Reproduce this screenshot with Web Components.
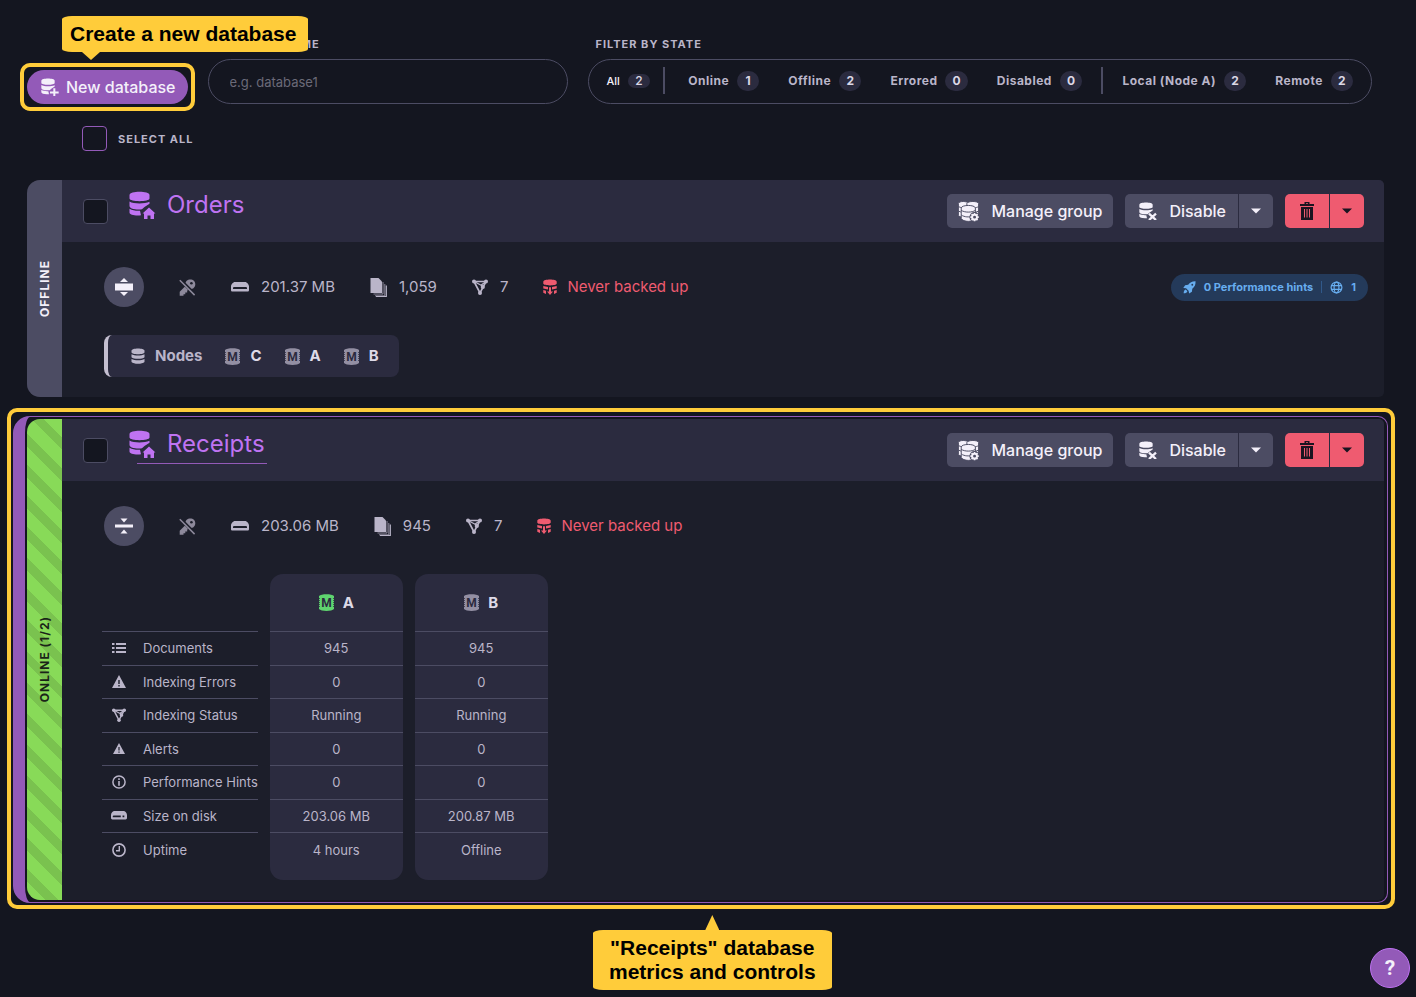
<!DOCTYPE html>
<html lang="en">
<head>
<meta charset="utf-8">
<meta name="viewport" content="width=device-width, initial-scale=1">
<title>Databases</title>
<style>
  html {
    background: #141620;
    --panel: #1c1e2a;
    --panel-head: #2b2b3f;
    --well: #141620;
    --line: #4c4c63;
    --muted: #bab5c9;
    --bright: #f4f0fa;
    --purple: #935ab8;
    --link: #bf73f2;
    --red: #ef5b70;
    --green: #88da58;
    --note: #ffcc3a;
  }

  body {
    color: #bab5c9;
    font-family: Inter, "Open Sans", sans-serif;
    font-size: 15px;
    line-height: 20px;
    margin: 0;
  }
</style>
</head>
<body>
<databases-page></databases-page>

<script>
// the three stacked discs, with room for a small glyph at bottom right
const DISCS = `
  <path d="M.5 4C.5-.3 20.500-.3 20.500 4v3.500C20.500 11 .5 11 .5 7.500z"/>
  <path d="M.5 10.500c4 2.600 15 2.600 20 .3v2L15.500 16l-2.500 2.300C8 19 .5 18.200.5 15z"/>
  <path d="M.5 17.800c3 1.800 6.500 2.200 10.500 2l1 4.500C6 25 .5 23.700.5 21.500z"/>`;

// each icon is [viewBox, markup]
const ICONS = {
  'db-home': ['0 0 27 28', DISCS + '<path d="M20 16.500l6.500 6H25V28h-3.500v-3.500h-3V28H15v-5.500h-1.500z"/>'],
  'db-plus': ['0 0 27 28', DISCS + '<path d="M18.500 15.500h3v4.800h5v3h-5V28h-3v-4.700h-5v-3h5z"/>'],
  'db-cross': ['0 0 27 28', DISCS + '<path d="M15 17.500l10.500 9.500M25.500 17.500L15 27" fill="none" stroke="currentColor" stroke-width="3.500"/>'],
  'db-group': ['0 0 26 26', `
    <g stroke="#4c4c63" stroke-width="1.200">
      <path d="M.5 3C1-.2 12-.2 12.500 3v15c-1 2.500-11 2.500-12 0z"/>
      <path d="M11 3C12-.2 25-.2 25.500 3v15c-1 2.500-13 2.500-14.500 0z"/>
      <path d="M.5 7c2 1 4 1.300 6 1.300M.5 12.500c2 1 3 1.200 5 1.200M19.500 8.300c3 0 4.500-.5 6-1.300M20.500 13.700c2 0 3.500-.4 5-1.200" fill="none"/>
      <path d="M4 8.500C5 4.500 20.500 4.500 21.500 8.500v13c-2 5-15.500 5-17.500 0z"/>
      <path d="M4 11.500c4 3 13.500 3 17.500 0M4 17.200c4 3 10 3 13.500 1.500" fill="none"/>
    </g>
    <circle cx="20.500" cy="20" r="6.300" fill="#4c4c63"/>
    <circle cx="20.500" cy="20" r="3" fill="none" stroke="currentColor" stroke-width="2.400"/>
    <path d="M20.500 14.800v2M20.500 23.200v2M15.300 20h2M23.700 20h2M16.800 16.300l1.500 1.500M22.700 22.200l1.500 1.500M24.200 16.300l-1.500 1.500M18.300 22.200l-1.500 1.500" stroke="currentColor" stroke-width="2"/>`],
  'db': ['0 0 14 16', `
    <path d="M.5 2.800C.5-.4 13.500-.4 13.500 2.800v1.400c0 2.600-13 2.600-13 0z"/>
    <path d="M.5 6.200c3 1.700 10 1.700 13 0v3c-2 2.200-11 2.200-13 0z"/>
    <path d="M.5 11c3 1.700 10 1.700 13 0v3c-2 2.400-11 2.400-13 0z"/>`],
  'backup': ['0 0 14 16', `
    <path d="M.3 2.600C.3-.3 13.700-.3 13.700 2.600v2c0 2.500-13.400 2.500-13.400 0z"/>
    <path d="M.3 7L5 8v2.500L.3 9.500zM13.700 7L9 8v2.500l4.700-1zM.3 11l2.700.7V15L.3 13.800zM13.700 11l-2.700.7V15l2.700-1.200z"/>
    <path d="M6 8.300h2v4.200h2L7 16l-3-3.500h2z"/>`],
  'node': ['0 0 15 17', `
    <path d="M0 2C2-.5 13-.5 15 2v13c-2 2.500-13 2.500-15 0z"/>
    <path d="M.4 4v10M14.600 4v10" stroke="#2b2b3f" stroke-width=".8" stroke-dasharray="1 1"/>
    <text x="7.500" y="12.700" text-anchor="middle" font-family="Roboto, sans-serif" font-size="12" font-weight="700" fill="#2b2b3f">M</text>`],
  'key-off': ['0 0 17 17', `
    <path d="M6.300 5.500C6.300 2.300 8.500.5 11.300.5c2.900 0 5 2 5 4.800 0 3-2.100 4.900-5 4.900l-1.600-.1-1.500 1.700v1.700H6.300v1.700H4.500v1.600H.7v-4l5.800-5.800z"/>
    <circle cx="12.400" cy="4.300" r="1.300" fill="#1c1e2a"/>
    <path d="M1.500 1l14.300 14.300" fill="none" stroke="#1c1e2a" stroke-width="3.200"/>
    <path d="M.8 1.300l14.800 14.800" fill="none" stroke="currentColor" stroke-width="1.500"/>`],
  'disk': ['0 0 18 10', '<path fill-rule="evenodd" d="M4 0h10c2 0 4 2.500 4 4.500V8c0 1-.6 1.500-1.500 1.500h-15C.6 9.500 0 9 0 8V4.500C0 2.500 2 0 4 0zM3 5c-.6 0-1 .3-1 .9V7h14V5.900c0-.6-.4-.9-1-.9z"/>'],
  'disk-dot': ['0 0 18 10', '<path fill-rule="evenodd" d="M4 0h10c2 0 4 2.500 4 4.500V8c0 1-.6 1.500-1.500 1.500h-15C.6 9.500 0 9 0 8V4.500C0 2.500 2 0 4 0zM3 5c-.6 0-1 .3-1 .9V7h9V5zM13 5v2h2V5z"/>'],
  'docs': ['0 0 17 19', `
    <path d="M.5 0h8l3.500 3.500V15H.5z"/>
    <path d="M13 4v12H3.500M14.800 6v11.800H5" fill="none" stroke="currentColor" opacity=".7"/>
    <path d="M16.300 7.500v11H6" fill="none" stroke="currentColor" stroke-width="1.200"/>`],
  'index': ['0 0 16 16', `
    <path d="M2 2.500h12L8 14z" fill="none" stroke="currentColor" stroke-width="1.700"/>
    <path d="M2 2.500l9.500 5M8.500 6.500l5-3.500" fill="none" stroke="currentColor" stroke-width="1.400"/>
    <circle cx="2" cy="2.500" r="2"/><circle cx="14" cy="2.500" r="2"/>
    <circle cx="8" cy="14" r="2"/><circle cx="10.800" cy="8" r="2.100"/>`],
  'expand': ['0 0 18 18', '<path d="M9 0l4 4H5zM0 5.500h18v7H0zM5 14h8l-4 4z"/>'],
  'collapse': ['0 0 18 18', '<path d="M5.500 1.500h7L9 5.500zM0 7.500h18v3H0zM9 12.500l3.500 4h-7z"/>'],
  'trash': ['0 0 14 18', `
    <path d="M4.500 0h5v2H14v2H0V2h4.500zM6 1.200V2h2v-.8z" fill-rule="evenodd"/>
    <path d="M1 5h12v13H1z"/>
    <path d="M4.500 7v8.500M7 7v8.500M9.500 7v8.500" stroke="#ef5b70" stroke-width="1"/>`],
  'caret': ['0 0 10 6', '<path d="M0 .5h10l-5 5z"/>'],
  'rocket': ['0 0 14 14', `
    <path fill-rule="evenodd" d="M13.500.3c.2 4-1 6.200-3.500 8l-.4 3.200-3 2-.6-3-2.700-2.600L.3 7.500l2-3 3.300-.4C7.500 1.500 9.800.2 13.500.3zM10 3a1 1 0 100 2 1 1 0 000-2z"/>
    <path d="M3 9.200L4.700 11c-.6 1.600-2 2.300-4 2.200 0-2 .6-3.500 2.300-4z"/>`],
  'globe': ['0 0 14 14', `
    <g fill="none" stroke="currentColor" stroke-width="1.300"><circle cx="7" cy="7" r="5.800"/>
    <ellipse cx="7" cy="7" rx="2.600" ry="5.800"/><path d="M1.700 5h10.600M1.700 9h10.600"/></g>`],
  'list': ['0 0 14 12', '<path d="M0 1h2.500v2H0zM4 1h10v2H4zM0 5h2.500v2H0zM4 5h10v2H4zM0 9h2.500v2H0zM4 9h10v2H4z"/>'],
  'warning': ['0 0 14 13', '<path fill-rule="evenodd" d="M7 0l7 13H0zM6.300 5v4h1.400V5zM6.300 10v1.400h1.400V10z"/>'],
  'alert': ['0 0 14 13', '<path fill-rule="evenodd" d="M7 1l6 11H1zM6.400 5v3.500h1.200V5zM6.400 9.500v1.200h1.200V9.500z"/>'],
  'info': ['0 0 14 14', '<circle cx="7" cy="7" r="6.100" fill="none" stroke="currentColor" stroke-width="1.500"/><path d="M6.200 3.300h1.600v1.600H6.200zM6.200 6h1.600v4.700H6.200z"/>'],
  'clock': ['0 0 14 14', '<circle cx="7" cy="7" r="6.100" fill="none" stroke="currentColor" stroke-width="1.600"/><path d="M7.300 3v4.700H4" fill="none" stroke="currentColor" stroke-width="1.400"/>'],
};

function attach(el, html) {
  const template = document.createElement('template');
  template.innerHTML = html;
  el.attachShadow({ mode: 'open' });
  el.shadowRoot.appendChild(template.content.cloneNode(true));
}

// <rv-icon name="db" size="16"> size is the drawn width
class RvIcon extends HTMLElement {
  connectedCallback() {
    if (this.shadowRoot) return;
    const [box, markup] = ICONS[this.getAttribute('name')];
    const size = this.getAttribute('size') || 16;
    attach(this, `
      <style>
        :host { display: inline-flex; flex: none; }
        svg { display: block; fill: currentColor; height: auto; }
      </style>
      <svg viewBox="${box}" width="${size}" aria-hidden="true">${markup}</svg>
    `);
  }
}

// <rv-callout tail="down|up"> yellow note with a pointer
class RvCallout extends HTMLElement {
  constructor() {
    super();
    attach(this, `
      <style>
        :host {
          background: var(--note);
          border-radius: 10px / 3px;
          color: #000;
          display: block;
          font: bold 21px/24px "Liberation Sans", Arial, sans-serif;
          padding: 6px 12px 6px 8px;
          position: absolute;
          white-space: nowrap;
          z-index: 2;
        }
        :host::after {
          background: var(--note);
          content: "";
          height: 8px;
          left: 20px;
          position: absolute;
          top: 100%;
          width: 18px;
          clip-path: polygon(0 0, 100% 0, 50% 100%);
        }
        :host([tail="up"]) { padding: 6px 16px; text-align: center; }
        :host([tail="up"])::after {
          bottom: 100%;
          clip-path: polygon(50% 0, 100% 100%, 0 100%);
          height: 15px;
          left: 50%;
          margin-left: -7px;
          top: auto;
          width: 14px;
        }
      </style>
      <slot></slot>
    `);
  }
}

// <rv-highlight> yellow frame around whatever it holds
class RvHighlight extends HTMLElement {
  constructor() {
    super();
    attach(this, `
      <style>
        :host { display: block; position: relative; }
        .frame {
          border: 4px solid var(--note);
          border-radius: 10px;
          inset: var(--frame-inset, -7px);
          pointer-events: none;
          position: absolute;
        }
      </style>
      <slot></slot>
      <div class="frame"></div>
    `);
  }
}

// <rv-button icon="..." icon-size="..." tone="danger" part-of="start|end" label="...">
class RvButton extends HTMLElement {
  connectedCallback() {
    if (this.shadowRoot) return;
    const icon = this.getAttribute('icon');
    const label = this.getAttribute('label');
    attach(this, `
      <style>
        :host { display: block; }
        button {
          align-items: center;
          background: var(--line);
          border: 0;
          border-radius: 5px;
          color: var(--bright);
          cursor: pointer;
          display: flex;
          font: 500 16px/20px Inter, sans-serif;
          gap: 12px;
          height: 34px;
          padding: 0 11px;
          white-space: nowrap;
        }
        button:hover { filter: brightness(1.1); }
        :host([part-of="start"]) button { border-radius: 5px 0 0 5px; padding: 0 12px 0 14px; }
        :host([part-of="end"]) button { border-radius: 0 5px 5px 0; padding: 0 12px; }
        :host([tone="danger"]) button { background: var(--red); color: #1a1420; }
        :host([tone="danger"][part-of="start"]) button { padding: 0 15px; }
        :host([tone="primary"]) button {
          background: var(--purple);
          border-radius: 17px;
          gap: 7px;
          padding: 0 12px 0 14px;
        }
      </style>
      <button type="button" ${label ? `aria-label="${label}"` : ''}>
        <rv-icon name="${icon}" size="${this.getAttribute('icon-size') || 18}"></rv-icon>
        ${label ? '' : '<slot></slot>'}
      </button>
    `);
  }
}

// <rv-check label="..." show-label>
class RvCheck extends HTMLElement {
  connectedCallback() {
    if (this.shadowRoot) return;
    const shown = this.hasAttribute('show-label');
    const label = this.getAttribute('label');
    attach(this, `
      <style>
        :host { display: block; }
        label { align-items: center; display: flex; gap: 11px; }
        input {
          appearance: none;
          background: var(--well);
          border: 1px solid ${shown ? 'var(--purple)' : 'var(--line)'};
          border-radius: 4px;
          height: 25px;
          margin: 0;
          width: 25px;
        }
        input:checked { background: var(--purple); }
        span {
          font-size: 11px;
          font-weight: 700;
          letter-spacing: 1px;
          text-transform: uppercase;
        }
      </style>
      <label><input type="checkbox" ${shown ? '' : `aria-label="${label}"`}>${shown ? `<span>${label}</span>` : ''}</label>
    `);
  }
}

class StateFilter extends HTMLElement {
  constructor() {
    super();
    const item = ([name, count]) => `<button type="button">${name}<span class="count">${count}</span></button>`;
    attach(this, `
      <style>
        :host { display: block; }
        .title {
          font-size: 11px;
          font-weight: 700;
          letter-spacing: 1px;
          line-height: 16px;
          margin: 0 0 7px 8px;
        }
        .states {
          align-items: center;
          background: var(--well);
          border: 1px solid var(--line);
          border-radius: 23px;
          box-sizing: border-box;
          display: flex;
          height: 45px;
          justify-content: space-between;
          padding: 0 18px 2px;
        }
        button {
          align-items: center;
          background: none;
          border: 0;
          color: inherit;
          cursor: pointer;
          display: flex;
          font: 700 12px/20px Inter, sans-serif;
          gap: 8px;
          letter-spacing: 0.5px;
          padding: 0;
          white-space: nowrap;
        }
        .all { color: var(--bright); font-size: 11px; font-weight: 500; letter-spacing: 0; }
        .count {
          background: var(--panel-head);
          border-radius: 10px;
          color: #dcd8e6;
          font-size: 12px;
          letter-spacing: 0;
          min-width: 8px;
          padding: 0 7px;
          text-align: center;
        }
        .all .count { line-height: 14px; }
        .bar { background: var(--line); height: 27px; margin: 0 -10px; width: 2px; }
        .all + .bar { margin: 0 -6px 0 -16px; }
      </style>
      <div class="title">FILTER BY STATE</div>
      <div class="states" role="group" aria-label="Filter by state">
        <button type="button" class="all">All<span class="count">2</span></button>
        <div class="bar"></div>
        ${[['Online', 1], ['Offline', 2], ['Errored', 0], ['Disabled', 0]].map(item).join('')}
        <div class="bar"></div>
        ${[['Local (Node A)', 2], ['Remote', 2]].map(item).join('')}
      </div>
    `);
  }
}

class NameFilter extends HTMLElement {
  constructor() {
    super();
    attach(this, `
      <style>
        :host { display: block; }
        label {
          display: block;
          font-size: 11px;
          font-weight: 700;
          letter-spacing: 1px;
          line-height: 16px;
          margin: 0 0 7px 8px;
        }
        input {
          background: var(--well);
          border: 1px solid var(--line);
          border-radius: 23px;
          box-sizing: border-box;
          color: var(--bright);
          display: block;
          font: 13px/20px Inter, sans-serif;
          height: 45px;
          padding: 0 21px;
          width: 100%;
        }
        input::placeholder { color: #6b6a78; opacity: 1; }
      </style>
      <label for="name">FILTER BY NAME</label>
      <input id="name" type="text" placeholder="e.g. database1">
    `);
  }
}

// table of per-node numbers, one column for each node
class NodeMetrics extends HTMLElement {
  constructor() {
    super();
    const rows = [
      ['list', 'Documents', '945', '945'],
      ['warning', 'Indexing Errors', '0', '0'],
      ['index', 'Indexing Status', 'Running', 'Running'],
      ['alert', 'Alerts', '0', '0'],
      ['info', 'Performance Hints', '0', '0'],
      ['disk-dot', 'Size on disk', '203.06 MB', '200.87 MB'],
      ['clock', 'Uptime', '4 hours', 'Offline'],
    ];
    attach(this, `
      <style>
        :host { display: block; margin: 0 -14px; }
        table {
          border-collapse: separate;
          border-spacing: 12px 0;
          font-size: 13px;
          height: 306px;
        }
        td, tbody th {
          border-top: 1px solid var(--line);
          font-weight: 400;
          padding: 6px 0;
        }
        tbody th { text-align: left; }
        tbody th div { align-items: center; display: flex; gap: 15px; white-space: nowrap; }
        .icon { display: flex; justify-content: center; margin-left: 8px; width: 18px; }
        td, thead th {
          background: var(--panel-head);
          box-sizing: border-box;
          text-align: center;
          width: 133px;
        }
        thead th { border-radius: 13px 13px 0 0; height: 57px; padding: 0; }
        thead td { background: none; border: 0; width: auto; }
        tbody tr:last-child > * { height: 48px; padding: 0 0 14px; box-sizing: border-box; }
        tbody tr:last-child td { border-radius: 0 0 13px 13px; }
        .node {
          align-items: center;
          color: #dedae8;
          display: flex;
          font-size: 15px;
          font-weight: 700;
          gap: 9px;
          justify-content: center;
        }
        .node rv-icon { color: #938fa3; }
        .node .up { color: #5fd46f; }
      </style>
      <table>
        <thead>
          <tr>
            <td></td>
            <th scope="col"><div class="node"><rv-icon class="up" name="node" size="15"></rv-icon>A</div></th>
            <th scope="col"><div class="node"><rv-icon name="node" size="15"></rv-icon>B</div></th>
          </tr>
        </thead>
        <tbody>
          ${rows.map(([icon, name, a, b]) => `
            <tr>
              <th scope="row"><div><span class="icon"><rv-icon name="${icon}" size="${icon === 'disk-dot' ? 16 : 14}"></rv-icon></span>${name}</div></th>
              <td>${a}</td>
              <td>${b}</td>
            </tr>`).join('')}
        </tbody>
      </table>
    `);
  }
}

class NodeStrip extends HTMLElement {
  constructor() {
    super();
    attach(this, `
      <style>
        :host { display: flex; }
        .nodes {
          align-items: center;
          background: var(--panel-head);
          border-left: 4px solid #c4bfd0;
          border-radius: 8px;
          box-sizing: border-box;
          display: flex;
          font-weight: 700;
          gap: 23px;
          height: 42px;
          padding: 0 20px 0 23px;
        }
        span { align-items: center; display: flex; gap: 10px; }
        .node { color: #dedae8; }
        .node rv-icon { color: #938fa3; }
      </style>
      <div class="nodes">
        <span><rv-icon name="db" size="14"></rv-icon>Nodes</span>
        ${['C', 'A', 'B'].map(n => `<span class="node"><rv-icon name="node" size="15"></rv-icon>${n}</span>`).join('')}
      </div>
    `);
  }
}

// <database-card name status size docs indexes [online] [expanded]>
class DatabaseCard extends HTMLElement {
  connectedCallback() {
    if (this.shadowRoot) return;
    const name = this.getAttribute('name');
    const open = this.hasAttribute('expanded');
    attach(this, `
      <style>
        :host { display: block; }
        article { background: var(--panel); border-radius: 13px 5px 5px 13px; display: flex; overflow: hidden; }
        .ribbon {
          align-items: center;
          background: var(--line);
          color: var(--bright);
          display: flex;
          flex: none;
          font-size: 12px;
          font-weight: 700;
          justify-content: center;
          letter-spacing: 1px;
          width: 35px;
        }
        .ribbon span { writing-mode: vertical-rl; transform: rotate(180deg); }
        :host([online]) .ribbon {
          background: repeating-linear-gradient(45deg, var(--green) 0 13px, #7ac24f 13px 22px);
          color: #1a2418;
        }
        .main { flex: 1; min-width: 0; }
        header {
          align-items: center;
          background: var(--panel-head);
          box-sizing: border-box;
          display: flex;
          height: 62px;
          padding: 0 20px 0 21px;
        }
        h2 { flex: 1; font-size: 24px; font-weight: 400; line-height: 32px; margin: 0 0 4px 21px; }
        a { color: var(--link); display: inline-flex; gap: 11px; position: relative; text-decoration: none; }
        :host([online]) a::after {
          border-bottom: 1px solid var(--purple);
          bottom: -4px;
          content: "";
          left: 8px;
          position: absolute;
          right: -2px;
        }
        .actions { display: flex; gap: 12px; }
        .split { display: flex; gap: 1px; }
        .body { padding: 25px 16px 20px 42px; }
        .stats { align-items: center; display: flex; gap: 35px; margin-bottom: 28px; }
        .stats > span { align-items: center; display: flex; gap: 12px; }
        .toggle {
          align-items: center;
          background: var(--line);
          border: 0;
          border-radius: 50%;
          color: var(--bright);
          display: flex;
          height: 40px;
          justify-content: center;
          padding: 0;
          width: 40px;
        }
        .key { color: #8d899b; }
        .stats .backup { color: var(--red); gap: 10px; }
        .hints {
          align-items: center;
          background: #243a5a;
          border-radius: 14px;
          color: #67adef;
          display: flex;
          font-size: 11px;
          font-weight: 700;
          gap: 8px;
          height: 27px;
          margin-left: auto;
          padding: 0 12px;
        }
        .hints i { background: #31598a; height: 12px; width: 1px; }
      </style>
      <article>
        <div class="ribbon"><span>${this.getAttribute('status')}</span></div>
        <div class="main">
          <header>
            <rv-check label="Select ${name}"></rv-check>
            <h2><a href="#${name}"><rv-icon name="db-home" size="27"></rv-icon>${name}</a></h2>
            <div class="actions">
              <rv-button icon="db-group" icon-size="21">Manage group</rv-button>
              <div class="split">
                <rv-button part-of="start" icon="db-cross">Disable</rv-button>
                <rv-button part-of="end" icon="caret" icon-size="10" label="More disable options"></rv-button>
              </div>
              <div class="split">
                <rv-button tone="danger" part-of="start" icon="trash" icon-size="14" label="Delete"></rv-button>
                <rv-button tone="danger" part-of="end" icon="caret" icon-size="10" label="More delete options"></rv-button>
              </div>
            </div>
          </header>
          <div class="body">
            <div class="stats">
              <button class="toggle" type="button" aria-label="Toggle details" aria-expanded="${open}">
                <rv-icon name="${open ? 'collapse' : 'expand'}" size="18"></rv-icon>
              </button>
              <rv-icon class="key" name="key-off" size="17"></rv-icon>
              <span><rv-icon name="disk" size="18"></rv-icon>${this.getAttribute('size')}</span>
              <span><rv-icon name="docs" size="17"></rv-icon>${this.getAttribute('docs')}</span>
              <span><rv-icon name="index" size="16"></rv-icon>${this.getAttribute('indexes')}</span>
              <span class="backup"><rv-icon name="backup" size="14"></rv-icon>Never backed up</span>
              ${this.hasAttribute('hints') ? `
              <div class="hints">
                <rv-icon name="rocket" size="13"></rv-icon>0 Performance hints<i></i>
                <rv-icon name="globe" size="13"></rv-icon>1
              </div>` : ''}
            </div>
            <slot></slot>
          </div>
        </div>
      </article>
    `);
  }
}

class HelpButton extends HTMLElement {
  constructor() {
    super();
    attach(this, `
      <style>
        :host { bottom: 9px; position: fixed; right: 6px; }
        button {
          background: var(--purple);
          border: 1px solid var(--link);
          border-radius: 50%;
          color: var(--bright);
          display: block;
          font: 700 21px/36px Roboto, sans-serif;
          height: 40px;
          padding: 0;
          width: 40px;
        }
      </style>
      <button type="button">?</button>
    `);
  }
}

class DatabasesPage extends HTMLElement {
  constructor() {
    super();
    attach(this, `
      <style>
        :host {
          box-sizing: border-box;
          display: block;
          min-height: 100vh;
          padding: 36px 32px 94px 27px;
          position: relative;
        }
        .create { left: 62px; top: 16px; }
        .toolbar { align-items: flex-end; display: flex; gap: 20px; padding-right: 12px; }
        name-filter { flex: 0 0 360px; }
        state-filter { flex: 1; min-width: 0; }
        .select-all { margin: 22px 0 29px 55px; }
        .current { --frame-inset: -8px -11px -6px -20px; margin-top: 22px; }
        /* purple outline that marks the open database */
        .selected {
          border: solid var(--purple);
          border-width: 1px 1px 1px 12px;
          border-radius: 17px 10px 10px 17px;
          margin: -3px -4px -3px -14px;
          padding: 2px 3px 2px 2px;
        }
        .metrics { left: 566px; top: calc(100% + 27px); }
      </style>
      <rv-callout class="create">Create a new database</rv-callout>
      <div class="toolbar">
        <rv-highlight><rv-button tone="primary" icon="db-plus">New database</rv-button></rv-highlight>
        <name-filter></name-filter>
        <state-filter></state-filter>
      </div>
      <rv-check class="select-all" label="Select all" show-label></rv-check>
      <database-card name="Orders" status="OFFLINE" size="201.37 MB" docs="1,059" indexes="7" hints>
        <node-strip></node-strip>
      </database-card>
      <rv-highlight class="current">
        <div class="selected">
          <database-card name="Receipts" status="ONLINE (1/2)" size="203.06 MB" docs="945" indexes="7" online expanded>
            <node-metrics></node-metrics>
          </database-card>
        </div>
        <rv-callout class="metrics" tail="up">"Receipts" database<br>metrics and controls</rv-callout>
      </rv-highlight>
      <help-button></help-button>
    `);
  }
}

customElements.define('rv-icon', RvIcon);
customElements.define('rv-callout', RvCallout);
customElements.define('rv-highlight', RvHighlight);
customElements.define('rv-button', RvButton);
customElements.define('rv-check', RvCheck);
customElements.define('state-filter', StateFilter);
customElements.define('name-filter', NameFilter);
customElements.define('node-metrics', NodeMetrics);
customElements.define('node-strip', NodeStrip);
customElements.define('database-card', DatabaseCard);
customElements.define('help-button', HelpButton);
customElements.define('databases-page', DatabasesPage);
</script>
</body>
</html>
